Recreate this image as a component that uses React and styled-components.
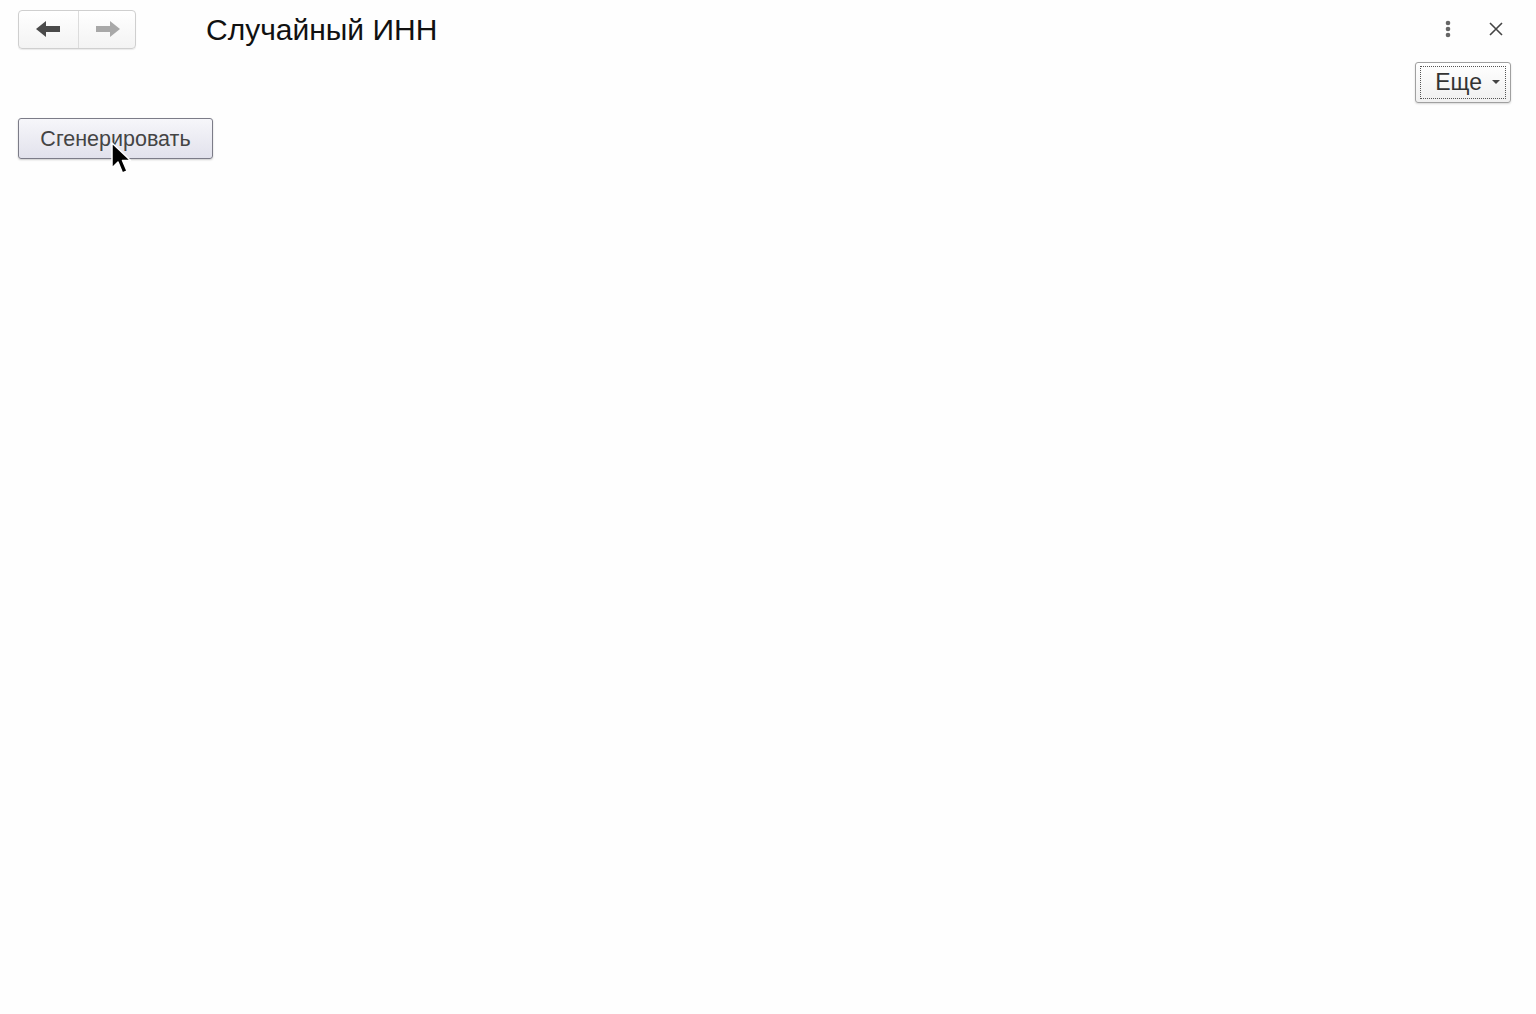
import React from "react";
import styled, { createGlobalStyle } from "styled-components";

const GlobalStyle = createGlobalStyle`
  html, body {
    margin: 0;
    padding: 0;
    background: #fefefe;
    font-family: Arial, "Liberation Sans", sans-serif;
  }
`;

const Page = styled.div`
  width: 1536px;
  height: 1014px;
  box-sizing: border-box;
  padding: 9px 18px 0 18px;
  background: #fefefe;
`;

const Header = styled.div`
  display: flex;
  align-items: center;
  height: 40px;
`;

const NavGroup = styled.div`
  display: flex;
  height: 39px;
  border: 1px solid #cfcfcf;
  border-radius: 4px;
  background: linear-gradient(#ffffff, #f3f3f3);
  box-shadow: 0 1px 1px rgba(0, 0, 0, 0.08);
  box-sizing: border-box;
`;

const NavButton = styled.button`
  display: flex;
  align-items: center;
  justify-content: center;
  width: ${(p) => (p.$first ? "59px" : "57px")};
  height: 100%;
  padding: 0;
  border: none;
  border-left: ${(p) => (p.$first ? "none" : "1px solid #dcdcdc")};
  background: none;
  cursor: pointer;
`;

const Title = styled.h1`
  margin: 2px 0 0 70px;
  font-size: 30px;
  font-weight: normal;
  color: #111;
`;

const HeaderIcons = styled.div`
  margin-left: auto;
  display: flex;
  align-items: center;
  gap: 38px;
  margin-right: 15px;
`;

const IconButton = styled.button`
  display: flex;
  align-items: center;
  justify-content: center;
  padding: 0;
  border: none;
  background: none;
  cursor: pointer;
`;

const CommandBar = styled.div`
  display: flex;
  justify-content: flex-end;
  margin-top: 13px;
  padding-right: 7px;
`;

const MoreButton = styled.button`
  display: flex;
  align-items: center;
  width: 96px;
  height: 41px;
  padding: 3px 4px;
  box-sizing: border-box;
  border: 1px solid #a0a0a0;
  border-radius: 3px;
  background: linear-gradient(#ffffff, #f0f0f0);
  box-shadow: 0 1px 2px rgba(0, 0, 0, 0.15);
  cursor: pointer;
`;

const FocusFrame = styled.span`
  flex: 1;
  display: flex;
  align-items: center;
  justify-content: flex-end;
  height: 100%;
  padding-right: 5px;
  gap: 10px;
  border: 1px dotted #555;
  box-sizing: border-box;
  font-family: Arial, "Liberation Sans", sans-serif;
  font-size: 23px;
  color: #333;
`;

const Content = styled.div`
  position: relative;
  margin-top: 15px;
`;

const GenerateButton = styled.button`
  width: 195px;
  height: 41px;
  padding: 2px 0 0;
  border: 1px solid #7c7c88;
  border-radius: 3px;
  background: linear-gradient(#f6f6fa, #e2e2ec);
  box-shadow: 0 1px 2px rgba(0, 0, 0, 0.2);
  font-family: Arial, "Liberation Sans", sans-serif;
  font-size: 21.5px;
  color: #444;
  cursor: pointer;
`;

const Cursor = styled.svg`
  position: absolute;
  left: 93px;
  top: 24px;
`;

export default function App() {
  return (
    <>
      <GlobalStyle />
      <Page>
        <Header>
          <NavGroup>
            <NavButton $first>
              <svg width="26" height="16" viewBox="0 0 26 16">
                <path d="M0 8 L10 0 L10 5 L24 5 L24 11 L10 11 L10 16 Z" fill="#4a4a4a" />
              </svg>
            </NavButton>
            <NavButton>
              <svg width="26" height="16" viewBox="0 0 26 16">
                <path d="M26 8 L16 0 L16 5 L2 5 L2 11 L16 11 L16 16 Z" fill="#a8a8a8" />
              </svg>
            </NavButton>
          </NavGroup>
          <Title>Случайный ИНН</Title>
          <HeaderIcons>
            <IconButton>
              <svg width="6" height="18" viewBox="0 0 6 18">
                <circle cx="3" cy="3" r="2.3" fill="#666" />
                <circle cx="3" cy="9" r="2.3" fill="#666" />
                <circle cx="3" cy="15" r="2.3" fill="#666" />
              </svg>
            </IconButton>
            <IconButton>
              <svg width="14" height="14" viewBox="0 0 14 14">
                <path d="M1 1 L13 13 M13 1 L1 13" stroke="#444" strokeWidth="1.6" />
              </svg>
            </IconButton>
          </HeaderIcons>
        </Header>
        <CommandBar>
          <MoreButton>
            <FocusFrame>
              Еще
              <svg width="8" height="5" viewBox="0 0 8 5">
                <path d="M0 0 L8 0 L4 4 Z" fill="#444" />
              </svg>
            </FocusFrame>
          </MoreButton>
        </CommandBar>
        <Content>
          <GenerateButton>Сгенерировать</GenerateButton>
          <Cursor width="22" height="34" viewBox="0 0 22 34">
            <path
              d="M1 1 L1 26 L7 20 L11.5 31 L16 29 L11.5 18.5 L19.5 18.5 Z"
              fill="#000"
              stroke="#fff"
              strokeWidth="1.5"
              strokeLinejoin="round"
            />
          </Cursor>
        </Content>
      </Page>
    </>
  );
}
